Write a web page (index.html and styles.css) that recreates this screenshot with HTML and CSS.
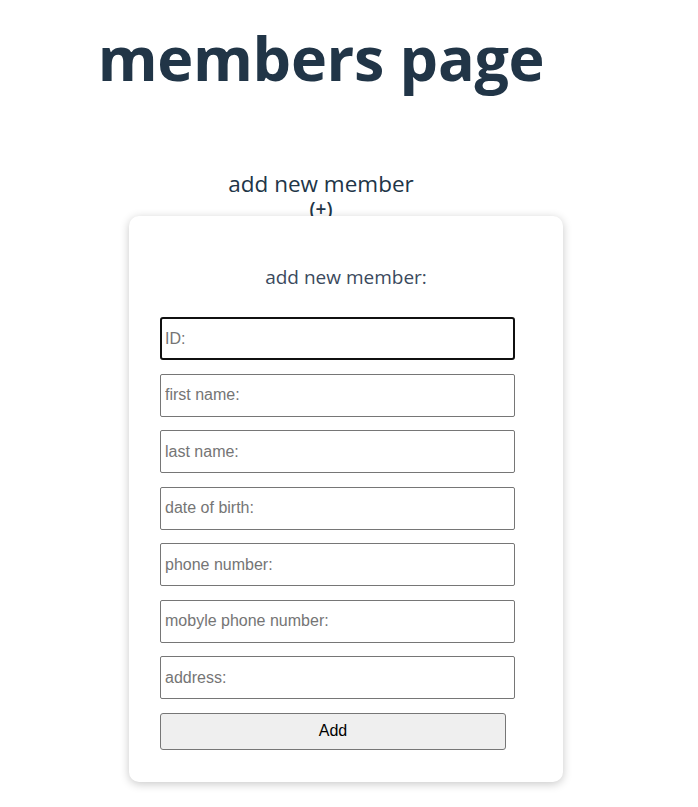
FILE: index.html
```html
<!DOCTYPE html>
<html lang="en">
<head>
<meta charset="utf-8">
<title>members page</title>
<link rel="stylesheet" href="styles.css">
</head>
<body>
<div class="page">
  <h1 class="title">members page</h1>
  <div class="add-toggle">
    <div class="add-label">add new member</div>
    <div class="add-plus">(+)</div>
  </div>
</div>
<div class="modal">
  <form class="card">
    <h3 class="card-title">add new member:</h3>
    <div class="fields">
      <input class="field focused" type="text" placeholder="ID:">
      <input class="field" type="text" placeholder="first name:">
      <input class="field" type="text" placeholder="last name:">
      <input class="field" type="text" placeholder="date of birth:">
      <input class="field" type="text" placeholder="phone number:">
      <input class="field" type="text" placeholder="mobyle phone number:">
      <input class="field" type="text" placeholder="address:">
      <button class="add-btn" type="button">Add</button>
    </div>
  </form>
</div>
</body>
</html>
```

FILE: styles.css
```css
html, body {
  margin: 0;
  padding: 0;
  background: #ffffff;
}

body {
  font-family: "Open Sans", "Noto Sans", sans-serif;
  color: #213547;
  position: relative;
  min-height: 807px;
}

.page {
  width: 642px;
  text-align: center;
}

.title {
  margin: 0;
  padding-top: 12px;
  font-size: 61px;
  font-weight: 700;
  letter-spacing: -0.3px;
  line-height: 92px;
  color: #213547;
}

.add-toggle {
  margin-top: 66px;
  display: flex;
  flex-direction: column;
  align-items: center;
}

.add-label {
  font-size: 22.5px;
  line-height: 28px;
  color: #213547;
}

.add-plus {
  font-size: 19px;
  font-weight: 600;
  line-height: 22px;
  color: #213547;
}

.modal {
  position: absolute;
  top: 216px;
  left: 129px;
}

.card {
  width: 434px;
  box-sizing: border-box;
  padding: 47px 31px 32px 31px;
  background: #ffffff;
  border-radius: 10px;
  box-shadow: 0 2px 10px rgba(0, 0, 0, 0.22);
}

.card-title {
  margin: 0 0 26px 0;
  font-size: 19px;
  font-weight: 400;
  line-height: 28px;
  color: #3b4a5d;
  text-align: center;
}

.fields {
  display: flex;
  flex-direction: column;
  align-items: flex-start;
  gap: 13.5px;
}

.field {
  width: 355px;
  height: 43px;
  box-sizing: border-box;
  margin: 0;
  padding: 0 4px;
  border: 1px solid #767676;
  border-radius: 2px;
  background: #ffffff;
  font-family: "Liberation Sans", Arial, sans-serif;
  font-size: 16px;
  color: #000000;
  outline: none;
}

.field::placeholder {
  color: #757575;
}

.field.focused {
  border: 2px solid #101010;
  border-radius: 3px;
  padding-left: 3px;
}

.add-btn {
  width: 346px;
  height: 37px;
  box-sizing: border-box;
  margin: 0;
  border: 1px solid #767676;
  border-radius: 3px;
  background: #efefef;
  font-family: "Liberation Sans", Arial, sans-serif;
  font-size: 16px;
  color: #000000;
}
```
